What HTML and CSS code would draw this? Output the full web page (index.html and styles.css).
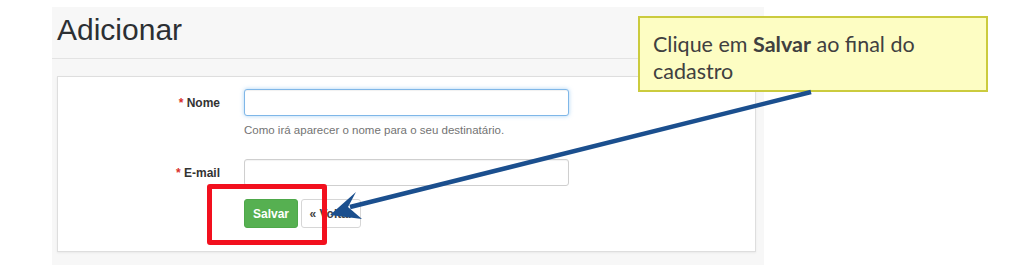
FILE: index.html
```html
<!DOCTYPE html>
<html lang="pt">
<head>
<meta charset="utf-8">
<title>Adicionar</title>
<link rel="stylesheet" href="styles.css">
</head>
<body>
<div class="stage">
  <div class="panel">
    <h1 class="title">Adicionar</h1>
    <div class="card">
      <div class="row">
        <label class="label"><span class="req">*</span> Nome</label>
        <div class="field">
          <input class="input focus" type="text">
          <p class="help">Como irá aparecer o nome para o seu destinatário.</p>
        </div>
      </div>
      <div class="row row-email">
        <label class="label"><span class="req">*</span> E-mail</label>
        <div class="field">
          <input class="input" type="text">
        </div>
      </div>
      <div class="row row-actions">
        <div class="label"></div>
        <div class="actions">
          <button class="btn btn-success">Salvar</button>
          <button class="btn btn-default">« Voltar</button>
        </div>
      </div>
    </div>
  </div>

  <div class="highlight"></div>

  <div class="callout"><span class="line">Clique em <b>Salvar</b> ao final do</span> <span class="line">cadastro</span></div>

  <svg class="arrow" width="1024" height="271" viewBox="0 0 1024 271">
    <line x1="811" y1="92" x2="350" y2="207" stroke="#1b4f8e" stroke-width="4.5" stroke-linecap="butt"/>
    <path d="M330 215 L356 192 L348 207 L362 219 Z" fill="#1b4f8e"/>
  </svg>
</div>
</body>
</html>
```

FILE: styles.css
```css
* { box-sizing: border-box; }
html, body { margin: 0; padding: 0; background: #fff; }
body { width: 1024px; height: 271px; overflow: hidden; font-family: "Liberation Sans", Arial, sans-serif; }

.stage { position: relative; width: 1024px; height: 271px; padding: 7px 0 0 52px; }

.panel {
  width: 712px;
  height: 258px;
  background: #f7f7f7;
  padding: 0 8px 0 5px;
}

.title {
  margin: 0;
  height: 52px;
  padding-top: 6px;
  font-family: "Liberation Sans", Arial, sans-serif;
  font-weight: normal;
  font-size: 30px;
  line-height: 34px;
  color: #2c2f33;
  border-bottom: 1px solid #e3e3e3;
  margin-left: -5px;
  margin-right: -8px;
  padding-left: 5px;
}

.card {
  margin-top: 17px;
  height: 176px;
  background: #fff;
  border: 1px solid #dedede;
  box-shadow: 0 1px 2px rgba(0,0,0,0.06);
  padding: 12px 0 0 0;
}

.row { display: flex; align-items: flex-start; }
.row-email { margin-top: 22px; }
.row-actions { margin-top: 13px; }

.label {
  width: 162px;
  flex: none;
  text-align: right;
  font-size: 12px;
  font-weight: bold;
  color: #333;
  padding-top: 7px;
  margin-right: 24px;
}
.req { color: #d9302c; }

.field { width: 325px; }

.input {
  display: block;
  width: 325px;
  height: 27px;
  border: 1px solid #cfcfcf;
  border-radius: 3px;
  background: #fff;
  margin: 0;
  padding: 4px 8px;
  outline: none;
  box-shadow: inset 0 1px 1px rgba(0,0,0,0.05);
}
.input.focus {
  border-color: #7fb7e8;
  box-shadow: inset 0 1px 1px rgba(0,0,0,0.06), 0 0 4px rgba(102,175,233,0.55);
}

.help {
  margin: 7px 0 0 0;
  font-size: 11.5px;
  line-height: 14px;
  color: #737373;
}

.actions { display: flex; gap: 3px; }
.btn {
  height: 29px;
  font-family: "Liberation Sans", Arial, sans-serif;
  font-size: 12px;
  font-weight: bold;
  border-radius: 3px;
  padding: 0;
  margin: 0;
}
.btn-success {
  width: 54px;
  background: #56b051;
  border: 1px solid #4ea84a;
  color: #fff;
}
.btn-default {
  width: 60px;
  background: #fff;
  border: 1px solid #d6d6d6;
  color: #444;
}

.highlight {
  position: absolute;
  left: 207px;
  top: 184px;
  width: 120px;
  height: 61px;
  border: 5px solid #f2101e;
  border-radius: 3px;
}

.callout {
  position: absolute;
  left: 638px;
  top: 16px;
  width: 350px;
  height: 76px;
  background: #fdfdc3;
  border: 2px solid #cbcb3e;
  padding: 13px 8px 0 13px;
  font-family: Lato, "Open Sans", sans-serif;
  font-size: 21.5px;
  line-height: 27px;
  color: #404040;
}
.callout .line { display: block; white-space: nowrap; }
.callout b { font-weight: bold; }

.arrow { position: absolute; left: 0; top: 0; pointer-events: none; }
```
